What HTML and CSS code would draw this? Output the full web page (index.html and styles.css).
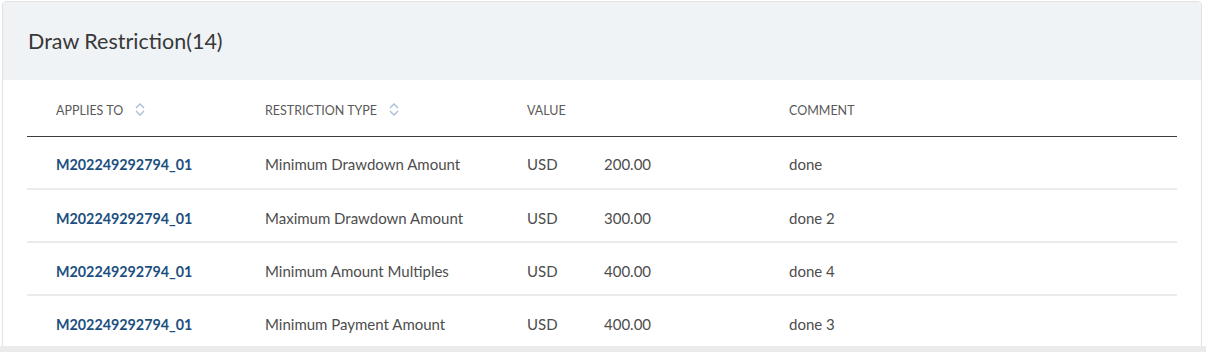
FILE: index.html
```html
<!DOCTYPE html>
<html>
<head>
<meta charset="utf-8">
<link rel="stylesheet" href="styles.css">
</head>
<body>
<div class="card">
  <div class="card-head"><h2 class="title">Draw Restriction(14)</h2></div>
  <div class="card-body">
    <table class="grid">
      <thead>
        <tr>
          <th class="c1"><span class="th-label">APPLIES TO</span><svg class="sort" width="10" height="13" viewBox="0 0 10 13"><path d="M1 5 L5 1 L9 5 M1 8 L5 12 L9 8" fill="none" stroke="#a8bdd4" stroke-width="1.3"/></svg></th>
          <th class="c2"><span class="th-label">RESTRICTION TYPE</span><svg class="sort" width="10" height="13" viewBox="0 0 10 13"><path d="M1 5 L5 1 L9 5 M1 8 L5 12 L9 8" fill="none" stroke="#a8bdd4" stroke-width="1.3"/></svg></th>
          <th class="c3">VALUE</th>
          <th class="c4">COMMENT</th>
        </tr>
      </thead>
      <tbody>
        <tr>
          <td><a class="link" href="#">M202249292794_01</a></td>
          <td>Minimum Drawdown Amount</td>
          <td><span class="cur">USD</span><span>200.00</span></td>
          <td>done</td>
        </tr>
        <tr>
          <td><a class="link" href="#">M202249292794_01</a></td>
          <td>Maximum Drawdown Amount</td>
          <td><span class="cur">USD</span><span>300.00</span></td>
          <td>done 2</td>
        </tr>
        <tr>
          <td><a class="link" href="#">M202249292794_01</a></td>
          <td>Minimum Amount Multiples</td>
          <td><span class="cur">USD</span><span>400.00</span></td>
          <td>done 4</td>
        </tr>
        <tr>
          <td><a class="link" href="#">M202249292794_01</a></td>
          <td>Minimum Payment Amount</td>
          <td><span class="cur">USD</span><span>400.00</span></td>
          <td>done 3</td>
        </tr>
      </tbody>
    </table>
  </div>
</div>
<div class="bottom-strip"></div>
</body>
</html>
```

FILE: styles.css
```css
html, body {
  margin: 0;
  padding: 0;
  background: #ffffff;
}
body {
  font-family: Lato, "Liberation Sans", sans-serif;
  color: #4d4d4d;
}
.card {
  margin: 1px 4px 0 2px;
  border: 1px solid #e2e2e2;
  border-radius: 4px;
  background: #fff;
  overflow: hidden;
}
.card-head {
  background: #eff3f6;
  height: 78px;
  display: flex;
  align-items: center;
  padding-left: 25px;
}
.title {
  margin: 0;
  font-size: 21.5px;
  font-weight: 400;
  color: #383838;
  padding-bottom: 1px;
}
.card-body {
  padding: 0 24px 0 24px;
}
.grid {
  width: 100%;
  border-collapse: collapse;
  table-layout: fixed;
}
.grid th {
  height: 56px;
  box-sizing: border-box;
  text-align: left;
  font-size: 12.5px;
  font-weight: 400;
  color: #5a5a5a;
  padding: 5px 0 0 29px;
  border-bottom: 1px solid #3c3c3c;
  white-space: nowrap;
}
.c1 { width: 209px; }
.c2 { width: 262px; }
.c3 { width: 262px; }
.th-label { vertical-align: middle; }
.sort {
  vertical-align: middle;
  margin-left: 12px;
  position: relative;
  top: -1px;
}
.grid td {
  height: 53px;
  box-sizing: border-box;
  padding: 4px 0 0 29px;
  font-size: 15px;
  color: #4d4d4d;
  border-bottom: 2px solid #ebebeb;
  white-space: nowrap;
}
.grid tbody tr:last-child td { border-bottom: none; }
.link {
  color: #1c4f80;
  font-weight: 700;
  font-size: 14.3px;
  text-decoration: none;
}
.cur {
  display: inline-block;
  width: 77px;
}
.bottom-strip {
  position: fixed;
  left: 0;
  right: 0;
  bottom: 0;
  height: 6px;
  background: #ebebeb;
}
```
